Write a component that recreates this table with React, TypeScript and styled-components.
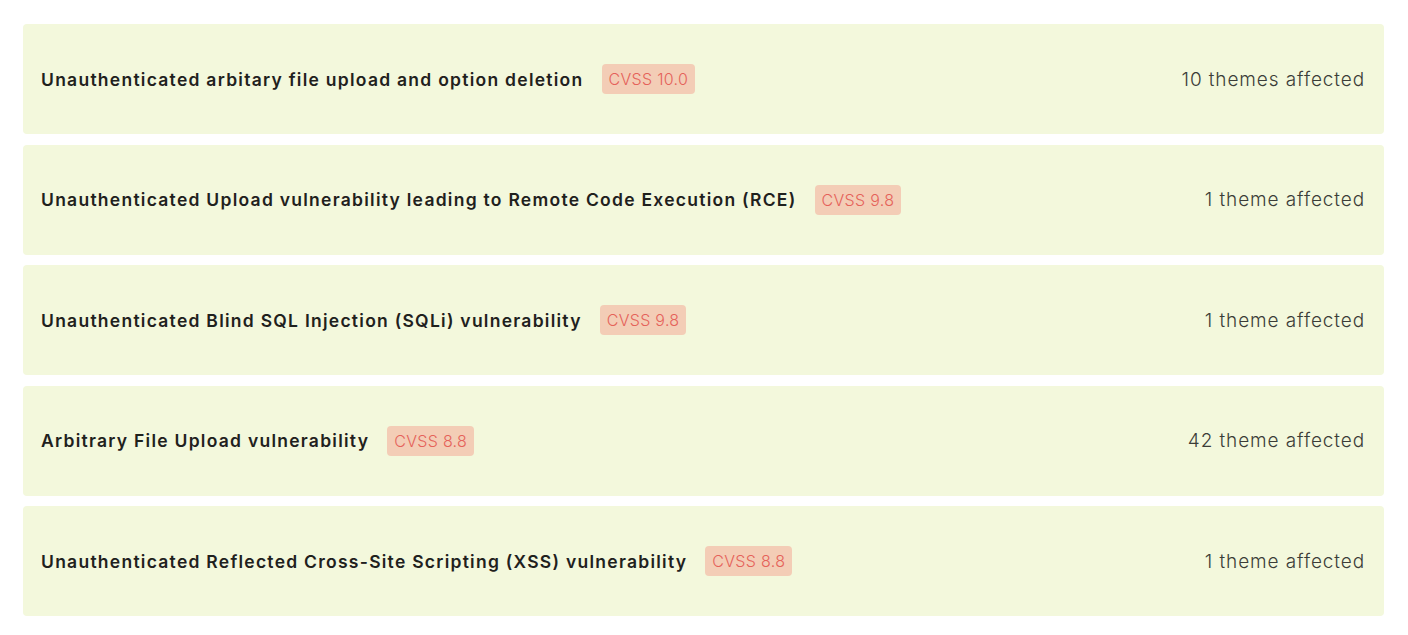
import { createGlobalStyle, styled } from "styled-components";

const GlobalStyle = createGlobalStyle`
  body {
    margin: 0;
    background: #ffffff;
    font-family: Inter, "Noto Sans", sans-serif;
  }
`;

const List = styled.div`
  display: flex;
  flex-direction: column;
  gap: 10.5px;
  padding: 24px 24px 0 23px;
`;

const Card = styled.div`
  display: flex;
  align-items: center;
  height: 110px;
  padding: 0 19px 0 18px;
  background: #f3f8dc;
  border-radius: 4px;
`;

const Title = styled.span`
  font-size: 17.5px;
  font-weight: 600;
  color: #1f211d;
  letter-spacing: 1.26px;
`;

const Badge = styled.span`
  margin-left: 18px;
  padding: 0 7px;
  height: 30px;
  line-height: 30px;
  background: #f3cdb6;
  border-radius: 4px;
  color: #e5625a;
  font-size: 16px;
  font-weight: 300;
  letter-spacing: 0.3px;
`;

const Affected = styled.span`
  margin-left: auto;
  font-size: 19px;
  font-weight: 300;
  color: #3b3d38;
  letter-spacing: 0.9px;
`;

const vulns = [
  { title: "Unauthenticated arbitary file upload and option deletion", cvss: "10.0", affected: "10 themes affected" },
  { title: "Unauthenticated Upload vulnerability leading to Remote Code Execution (RCE)", cvss: "9.8", affected: "1 theme affected" },
  { title: "Unauthenticated Blind SQL Injection (SQLi) vulnerability", cvss: "9.8", affected: "1 theme affected" },
  { title: "Arbitrary File Upload vulnerability", cvss: "8.8", affected: "42 theme affected" },
  { title: "Unauthenticated Reflected Cross-Site Scripting (XSS) vulnerability", cvss: "8.8", affected: "1 theme affected" },
];

export default function App() {
  return (
    <>
      <GlobalStyle />
      <List>
        {vulns.map((v) => (
          <Card key={v.title}>
            <Title>{v.title}</Title>
            <Badge>CVSS {v.cvss}</Badge>
            <Affected>{v.affected}</Affected>
          </Card>
        ))}
      </List>
    </>
  );
}
